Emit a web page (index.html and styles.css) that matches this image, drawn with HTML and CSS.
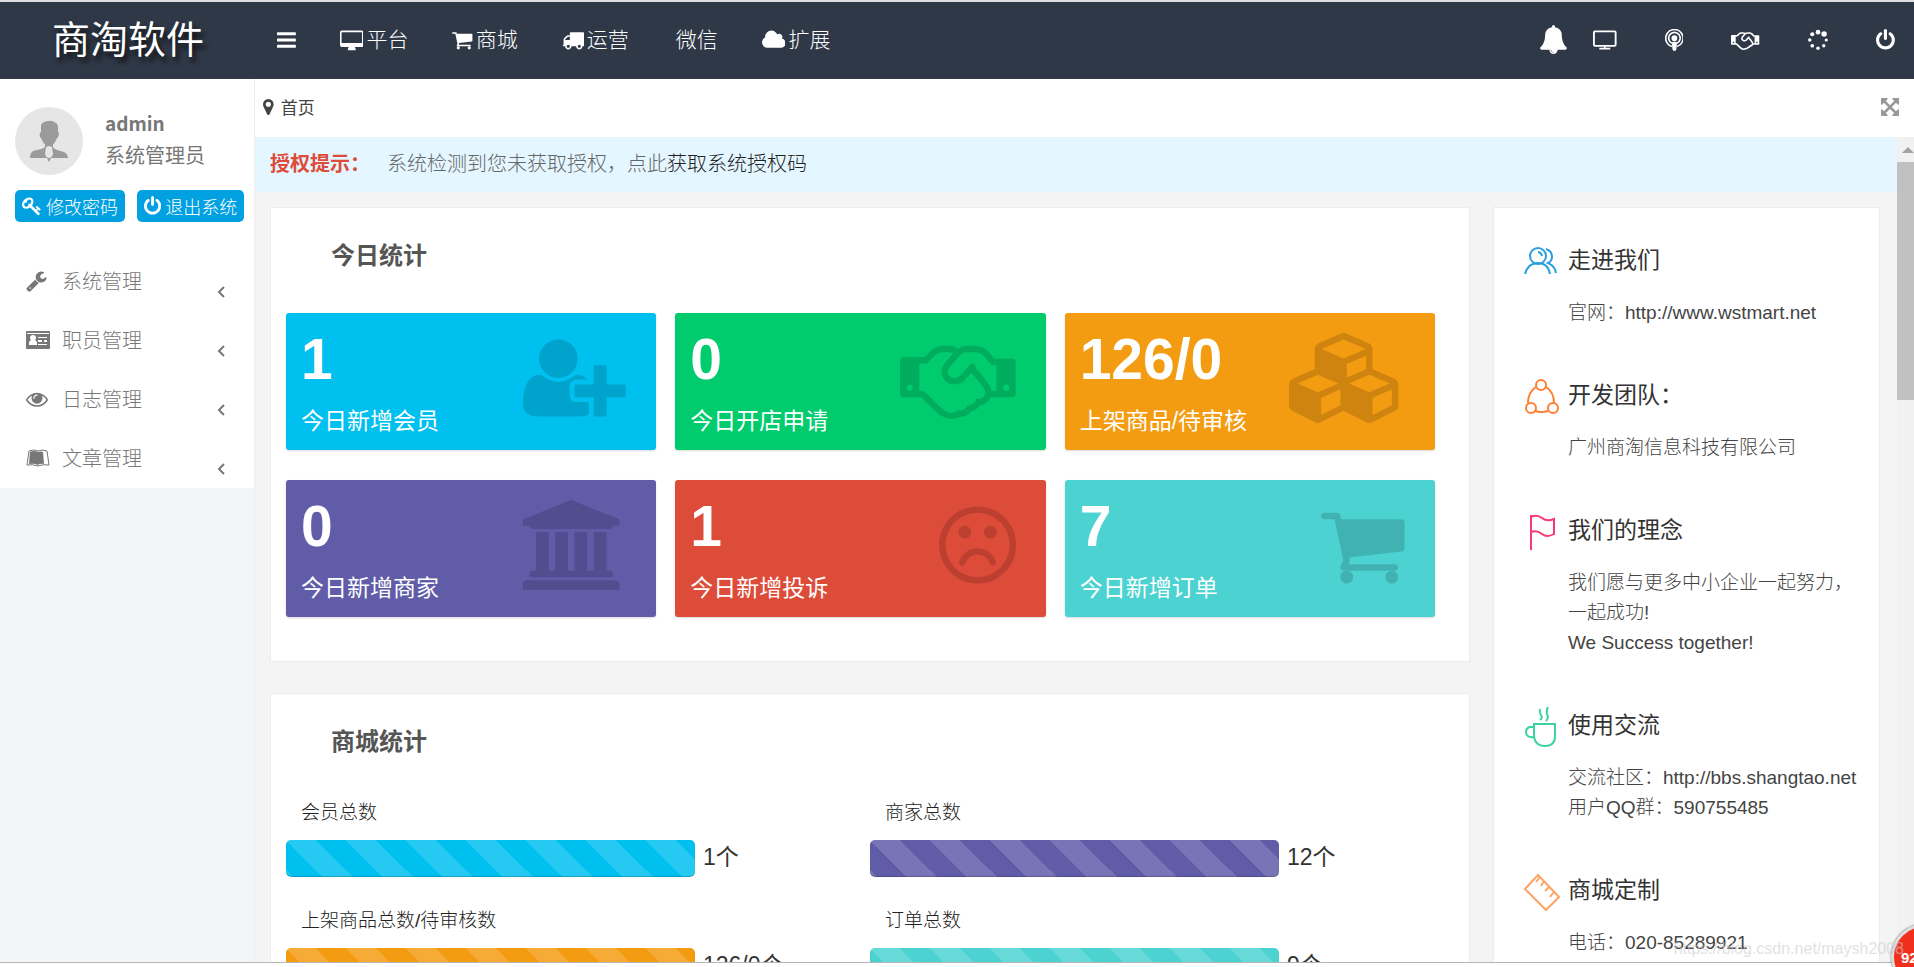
FILE: index.html
```html
<!doctype html>
<html lang="zh-CN">
<head>
  <meta charset="utf-8">
  <title>商淘软件</title>
  <link rel="stylesheet" href="styles.css">
</head>
<body>
  <svg class="defs">
    <defs>
      <path id="power" d="M1664 896q0 156-61 298t-164 245-245 164-298 61-298-61-245-164-164-245-61-298q0-182 80.500-343t226.500-270q43-32 95.500-25t83.500 50q32 42 24.500 94.500t-49.500 84.500q-98 74-151.500 181t-53.500 228q0 104 40.500 198.500t109.500 163.500 163.500 109.500 198.500 40.500 198.500-40.500 163.500-109.500 109.500-163.500 40.500-198.500q0-121-53.500-228t-151.500-181q-42-32-49.500-84.500t24.500-94.500q31-43 84-50t95 25q146 109 226.500 270t80.500 343zm-640-768v640q0 52-38 90t-90 38-90-38-38-90v-640q0-52 38-90t90-38 90 38 38 90z"/>
      <path id="cart" d="M704 1536q0 52-38 90t-90 38-90-38-38-90 38-90 90-38 90 38 38 90zm896 0q0 52-38 90t-90 38-90-38-38-90 38-90 90-38 90 38 38 90zm128-1088v512q0 24-16.500 42.500t-40.500 21.500l-1044 122q13 60 13 70 0 16-24 64h920q26 0 45 19t19 45-19 45-45 19h-1024q-26 0-45-19t-19-45q0-11 8-31.500t16-36 21.500-40 15.500-29.500l-177-823h-204q-26 0-45-19t-19-45 19-45 45-19h256q16 0 28.500 6.500t19.500 15.500 13 24.500 8 26 5.500 29.500 4.500 26h1201q26 0 45 19t19 45z"/>
      <path id="handshake" d="M192 1152q40 0 56-32t0-64-56-32-56 32 0 64 56 32zm1473-58q-10-13-38.500-50t-41.500-54-38-49-42.500-53-40.500-47-45-49l-125 140q-83 94-208.500 92t-205.500-98q-57-69-56.500-158t58.500-157l177-206q-22-11-51-16.500t-47.500-6-56.500.5-49 1q-92 0-158 66l-158 158h-155v544q5 0 21-.5t22 0 19.500 2 20.500 4.500 17.500 8.500 18.500 13.500l297 292q115 111 227 111 78 0 125-47 57 20 112.500-8t72.500-85q74 6 127-44 20-18 36-45.500t14-50.500q10 10 43 10 43 0 77-21t49.500-53 12-71.500-30.500-73.500zm159 58h96v-512h-93l-157-180q-66-76-169-76h-167q-89 0-146 67l-209 243q-28 33-28 75t27 75q43 51 110 52t111-49l193-218q25-23 53.500-21.500t47 27 8.500 56.500q16 19 56 63t60 68q29 36 82.500 105.500t64.500 84.500q52 66 60 140zm288 0q40 0 56-32t0-64-56-32-56 32 0 64 56 32zm192-576v640q0 26-19 45t-45 19h-434q-27 65-82 106.500t-125 51.500q-33 48-80.500 81.500t-102.500 45.500q-42 53-104.500 81.500t-128.500 24.500q-60 34-126 39.500t-127.500-14-117-53.500-103.500-81l-287-282h-358q-26 0-45-19t-19-45v-672q0-26 19-45t45-19h421q14-14 47-48t47.500-48 44-40 50.500-37.500 51-25.500 62-19.500 68-5.500h117q99 0 181 56 82-56 181-56h167q35 0 67 6t56.500 14.500 51.500 26.500 44.500 31 43 39.500 39 42 41 48 41.500 48.500h355q26 0 45 19t19 45z"/>
    </defs>
  </svg>

  <header class="header">
    <h1 class="logo">商淘软件</h1>
    <nav class="nav">
      <a href="#" aria-label="菜单"><svg class="icon" viewBox="128 0 1536 1792"><rect x="128" y="256" width="1536" height="256" rx="50"/><rect x="128" y="768" width="1536" height="256" rx="50"/><rect x="128" y="1280" width="1536" height="256" rx="50"/></svg></a>
      <a href="#"><svg class="icon" viewBox="0 0 1920 1792"><path fill-rule="evenodd" d="M160 128h1600q160 0 160 160v1024q0 160-160 160h-544q10 80 64 150v106h-640v-106q54-70 64-150h-544q-160 0-160-160v-1024q0-160 160-160zM128 300v840h1664v-840q0-44-44-44h-1576q-44 0-44 44z"/></svg>平台</a>
      <a href="#"><svg class="icon" viewBox="64 0 1664 1792"><use href="#cart"/></svg>商城</a>
      <a href="#"><svg class="icon" viewBox="0 0 1792 1792"><path d="M640 1408q0-52-38-90t-90-38-90 38-38 90 38 90 90 38 90-38 38-90zm-384-512h384v-256h-158q-13 0-22 9l-195 195q-9 9-9 22v30zm1280 512q0-52-38-90t-90-38-90 38-38 90 38 90 90 38 90-38 38-90zm256-1088v1024q0 15-4 26.500t-13.500 18.500-16.500 11.500-23.500 6-22.500 2-25.500 0-22.500-.5q0 106-75 181t-181 75-181-75-75-181h-384q0 106-75 181t-181 75-181-75-75-181h-64q-3 0-22.500.5t-25.500 0-22.500-2-23.500-6-16.500-11.500-13.500-18.500-4-26.500q0-26 19-45t45-19v-320q0-8-.5-35t0-38 2.500-34.500 6.500-37 14-30.500 22.500-30l198-198q19-19 50.500-32t58.500-13h160v-192q0-26 19-45t45-19h1024q26 0 45 19t19 45z"/></svg>运营</a>
      <a href="#"><i></i>微信</a>
      <a href="#"><svg class="icon" viewBox="64 0 1920 1792"><path d="M1984 1152q0 159-112.500 271.500t-271.500 112.500h-1088q-185 0-316.500-131.500t-131.500-316.500q0-132 71-241.500t187-163.500q-2-28-2-43 0-212 150-362t362-150q158 0 286.500 88t187.500 230q70-62 166-62 106 0 181 75t75 181q0 75-41 138 129 30 213 134.500t84 239.500z"/></svg>扩展</a>
    </nav>
    <div class="tools">
      <a class="bell" href="#" aria-label="消息"><svg viewBox="64 0 1664 1792"><path d="M912 1696q0-16-16-16-59 0-101.500-42.500t-42.500-101.500q0-16-16-16t-16 16q0 73 51.500 124.500t124.500 51.500q16 0 16-16zm816-288q0 52-38 90t-90 38h-448q0 106-75 181t-181 75-181-75-75-181h-448q-52 0-90-38t-38-90q50-42 91-88t85-119.500 74.500-158.500 50-206 19.500-260q0-152 117-282.500t307-158.500q-8-19-8-39 0-40 28-68t68-28 68 28 28 68q0 20-8 39 190 28 307 158.500t117 282.500q0 139 19.500 260t50 206 74.500 158.500 85 119.500 91 88z"/></svg></a>
      <a href="#" aria-label="前台"><svg class="icon" viewBox="0 0 1920 1792"><path fill-rule="evenodd" d="M160 128h1600q160 0 160 160v992q0 160-160 160h-736v96h384v128h-896v-128h384v-96h-736q-160 0-160-160v-992q0-160 160-160zM150 300v968q0 26 26 26h1568q26 0 26-26v-968q0-26-26-26h-1568q-26 0-26 26z"/></svg></a>
      <a href="#" aria-label="播客"><svg class="icon" viewBox="128 0 1536 1792"><g fill="none" stroke="#fff" stroke-width="130"><path d="M690 1430a708 708 0 1 1 412 0"/><path d="M700 1170a470 470 0 1 1 392 0"/></g><circle cx="896" cy="750" r="235"/><path d="M896 1010q210 0 210 130l-50 520q-10 132-160 132t-160-132l-50-520q0-130 210-130z"/></svg></a>
      <a href="#" aria-label="合作"><svg class="icon" viewBox="0 0 2304 1792"><use href="#handshake"/></svg></a>
      <a href="#" aria-label="清除缓存"><svg class="icon" viewBox="80 0 1664 1792"><circle cx="896" cy="256" r="190"/><circle cx="1390" cy="400" r="225"/><circle cx="1568" cy="896" r="128"/><circle cx="1364" cy="1364" r="136"/><circle cx="896" cy="1568" r="144"/><circle cx="428" cy="1364" r="152"/><circle cx="224" cy="896" r="144"/><circle cx="428" cy="428" r="170"/></svg></a>
      <a href="#" aria-label="退出"><svg class="icon" viewBox="128 0 1536 1792"><use href="#power"/></svg></a>
    </div>
  </header>

  <div class="body">
    <aside class="sidebar">
      <div class="side-inner">
        <div class="user">
          <svg class="avatar" viewBox="0 0 68 68"><circle cx="34" cy="34" r="34" fill="#e6e6e6"/><path fill="#9b9b9b" d="M26 18q2-4 8-4 3-1 5 1 4 1 4 5v5q2 1 0 5-1 1-2 3-1 3-3 4v3q1 2 4 3l7 2q4 2 4 6H15q0-5 3-7l8-2q4-1 4-3v-2q-2-1-3-4-1-2-2-3-1-4 1-5z"/><path fill="#e6e6e6" d="M31 40l3-1 3 1 1 7q-1 4-4 4t-4-4z"/><path fill="#9b9b9b" d="M32 51h4l-2 4z"/></svg>
          <div>
            <div class="user-name">admin</div>
            <div class="user-role">系统管理员</div>
          </div>
        </div>
        <div class="user-actions">
          <button type="button"><svg viewBox="0 0 1792 1792"><path d="M832 512q0-80-56-136t-136-56-136 56-56 136q0 42 19 83-41-19-83-19-80 0-136 56t-56 136 56 136 136 56 136-56 56-136q0-42-19-83 41 19 83 19 80 0 136-56t56-136zm851 704q0 17-49 66t-66 49q-9 0-28.500-16t-36.500-33-38.500-40-24.500-26l-96 96 220 220q28 28 28 68 0 42-39 81t-81 39q-40 0-68-28l-671-671q-176 131-365 131-163 0-265.500-102.500t-102.500-265.500q0-160 95-313t248-248 313-95q163 0 265.500 102.500t102.500 265.500q0 189-131 365l355 355 96-96q-3-3-26-24.500t-40-38.500-33-36.500-16-28.500q0-17 49-66t66-49q13 0 23 10 6 6 46 44.500t82 79.500 86.500 86 73 78 28.500 41z"/></svg>修改密码</button>
          <button type="button"><svg viewBox="128 0 1536 1792"><use href="#power"/></svg>退出系统</button>
        </div>
        <nav class="menu">
          <a href="#"><svg class="menu-icon" viewBox="64 0 1920 1792"><path d="M448 1472q0-26-19-45t-45-19-45 19-19 45 19 45 45 19 45-19 19-45zm644-420l-682 682q-37 37-90 37-52 0-91-37l-106-108q-38-36-38-90 0-53 38-91l681-681q39 98 114.500 173.500t173.500 114.500zm634-435q0 39-23 106-47 134-164.500 217.500t-258.500 83.500q-185 0-316.500-131.500t-131.500-316.500 131.500-316.500 316.500-131.500q58 0 121.500 16.500t107.500 46.500q16 11 16 28t-16 28l-293 169v224l193 107q5-3 79-48.500t135.500-81 70.500-35.500q15 0 23.500 10t8.500 25z"/></svg>系统管理<svg class="arrow" viewBox="0 0 8 12"><path d="M7 1L2 6l5 5"/></svg></a>
          <a href="#"><svg class="menu-icon" viewBox="0 0 24 22"><path fill-rule="evenodd" d="M1 2h22q1 0 1 1v16q0 1-1 1H1q-1 0-1-1V3q0-1 1-1zM1 4v1h22V4zM3 16h8v-2q0-2-2-3 1-1 1-2 0-3-3-3T4 9q0 1 1 2-2 1-2 3zM12 8v1h9V8zM12 11v2h4v-2zM18 11v2h3v-2zM12 15v1h9v-1z"/></svg>职员管理<svg class="arrow" viewBox="0 0 8 12"><path d="M7 1L2 6l5 5"/></svg></a>
          <a href="#"><svg class="menu-icon" viewBox="0 0 1955 1792"><path d="M1664 960q-152-236-381-353 61 104 61 225 0 185-131.500 316.500t-316.500 131.500-316.500-131.500-131.500-316.500q0-121 61-225-229 117-381 353 133 205 333.500 326.500t434.500 121.500 434.500-121.500 333.500-326.500zm-720-384q0-20-14-34t-34-14q-125 0-214.500 89.500t-89.500 214.500q0 20 14 34t34 14 34-14 14-34q0-86 61-147t147-61q20 0 34-14t14-34zm848 384q0 34-20 69-140 230-376.500 368.500t-499.500 138.500-499.500-139-376.500-368q-20-35-20-69t20-69q140-229 376.500-368t499.500-139 499.500 139 376.500 368q20 35 20 69z"/></svg>日志管理<svg class="arrow" viewBox="0 0 8 12"><path d="M7 1L2 6l5 5"/></svg></a>
          <a href="#"><svg class="menu-icon" viewBox="0 0 24 22"><path d="M4 5q4-2 8 0 3-1 5 0l1 12q-4-1-6 1-4-2-9-1z"/><path fill="none" stroke="currentColor" d="M3 4q5-2 9 0 4-2 9 0l2 14q-6-1-11 1-5-2-11-1z"/></svg>文章管理<svg class="arrow" viewBox="0 0 8 12"><path d="M7 1L2 6l5 5"/></svg></a>
        </nav>
      </div>
    </aside>

    <div class="content">
      <div class="crumb">
        <svg class="marker" viewBox="384 128 1024 1536"><path d="M1152 640q0-106-75-181t-181-75-181 75-75 181 75 181 181 75 181-75 75-181zm256 0q0 109-33 179l-364 774q-16 33-47.500 52t-67.500 19-67.500-19-46.500-52l-365-774q-33-70-33-179 0-212 150-362t362-150 362 150 150 362z"/></svg>
        <span>首页</span>
        <button class="expand" type="button" aria-label="全屏"><svg viewBox="128 128 1536 1536"><path d="M1411 541l-355 355 355 355 144-144q29-31 70-14 39 17 39 59v448q0 26-19 45t-45 19h-448q-42 0-59-40-17-39 14-69l144-144-355-355-355 355 144 144q31 30 14 69-17 40-59 40h-448q-26 0-45-19t-19-45v-448q0-42 40-59 39-17 69 14l144 144 355-355-355-355-144 144q-19 19-45 19-12 0-24-5-40-17-40-59v-448q0-26 19-45t45-19h448q42 0 59 40 17 39-14 69l-144 144 355 355 355-355-144-144q-31-30-14-69 17-40 59-40h448q26 0 45 19t19 45v448q0 42-39 59-13 5-25 5-26 0-45-19z"/></svg></button>
      </div>

      <div class="frame">
        <main class="page">
          <div class="alert"><strong>授权提示：</strong><span>系统检测到您未获取授权，点此<a href="#">获取系统授权码</a></span></div>
          <div class="columns">
            <div class="main-col">
              <section class="panel">
                <h2>今日统计</h2>
                <div class="cards">
                  <div class="card blue"><div class="num">1</div><div class="label">今日新增会员</div>
                    <svg viewBox="0 0 2048 1792"><path d="M704 896q-159 0-271.500-112.500t-112.500-271.500 112.500-271.500 271.500-112.500 271.500 112.500 112.500 271.500-112.500 271.500-271.500 112.500zm960 128h352q13 0 22.500 9.500t9.500 22.500v192q0 13-9.500 22.500t-22.500 9.500h-352v352q0 13-9.500 22.500t-22.500 9.500h-192q-13 0-22.500-9.500t-9.500-22.500v-352h-352q-13 0-22.500-9.500t-9.500-22.500v-192q0-13 9.500-22.500t22.500-9.500h352v-352q0-13 9.500-22.500t22.500-9.500h192q13 0 22.500 9.500t9.500 22.500v352zm-736 224q0 52 38 90t90 38h256v238q-68 50-171 50h-874q-121 0-194-69t-73-190q0-53 3.500-103.500t14-109 26.500-108.500 43-97.500 62-81 85.500-53.500 111.500-20q19 0 39 17 79 61 154.500 91.500t164.500 30.500 164.500-30.500 154.500-91.500q20-17 39-17 132 0 217 96h-223q-52 0-90 38t-38 90v192z"/></svg></div>
                  <div class="card green"><div class="num">0</div><div class="label">今日开店申请</div>
                    <svg viewBox="0 0 2304 1792"><use href="#handshake"/></svg></div>
                  <div class="card orange"><div class="num">126/0</div><div class="label">上架商品/待审核</div>
                    <svg viewBox="0 0 2304 1792"><path d="M640 1632l384-192v-314l-384 164v342zm-64-454l404-173-404-173-404 173zm1088 454l384-192v-314l-384 164v342zm-64-454l404-173-404-173-404 173zm-448-293l384-165v-266l-384 164v267zm-64-379l441-189-441-189-441 189zm1088 518v416q0 36-19 67t-52 47l-448 224q-25 14-57 14t-57-14l-448-224q-4-2-7-4-2 2-7 4l-448 224q-25 14-57 14t-57-14l-448-224q-33-16-52-47t-19-67v-416q0-38 21.500-70t56.500-48l434-186v-400q0-38 21.500-70t56.500-48l448-192q23-10 50-10t50 10l448 192q35 16 56.500 48t21.500 70v400l434 186q36 16 57 48t21 70z"/></svg></div>
                  <div class="card purple"><div class="num">0</div><div class="label">今日新增商家</div>
                    <svg viewBox="0 0 2048 1792"><path d="M960 0l960 384v128h-128q0 26-20.500 45t-48.500 19h-1526q-28 0-48.500-19t-20.500-45h-128v-128zm-704 640h256v768h128v-768h256v768h128v-768h256v768h128v-768h256v768h59q28 0 48.500 19t20.500 45v64h-1664v-64q0-26 20.500-45t48.500-19h59v-768zm1595 960q28 0 48.500 19t20.500 45v128h-1920v-128q0-26 20.500-45t48.500-19h1782z"/></svg></div>
                  <div class="card red"><div class="num">1</div><div class="label">今日新增投诉</div>
                    <svg viewBox="128 0 1536 1792"><path d="M1262 1229q8 25-4 48t-37 31-49-4-32-38q-25-80-92.500-129.500t-151.500-49.500-151.500 49.500-92.500 129.500q-8 26-31.500 38t-48.500 4q-26-8-38-31t-4-48q37-121 138-195t228-74 228 74 138 195zm-494-589q0 53-37.500 90.500t-90.500 37.500-90.500-37.500-37.500-90.500 37.500-90.500 90.500-37.500 90.500 37.500 37.500 90.500zm512 0q0 53-37.500 90.500t-90.500 37.500-90.500-37.500-37.500-90.500 37.500-90.500 90.500-37.500 90.500 37.500 37.500 90.500zm256 256q0-130-51-248.500t-136.500-204-204-136.500-248.500-51-248.500 51-204 136.500-136.500 204-51 248.500 51 248.500 136.500 204 204 136.500 248.500 51 248.500-51 204-136.500 136.500-204 51-248.500zm128 0q0 209-103 385.500t-279.500 279.500-385.500 103-385.500-103-279.500-279.500-103-385.500 103-385.500 279.500-279.500 385.500-103 385.500 103 279.500 279.500 103 385.500z"/></svg></div>
                  <div class="card teal"><div class="num">7</div><div class="label">今日新增订单</div>
                    <svg viewBox="64 0 1664 1792"><use href="#cart"/></svg></div>
                </div>
              </section>

              <section class="panel">
                <h2>商城统计</h2>
                <div class="totals">
                  <div class="total"><div class="total-name">会员总数</div><div class="total-row"><div class="bar blue"></div>1个</div></div>
                  <div class="total"><div class="total-name">商家总数</div><div class="total-row"><div class="bar purple"></div>12个</div></div>
                  <div class="total"><div class="total-name">上架商品总数/待审核数</div><div class="total-row"><div class="bar orange"></div>126/0个</div></div>
                  <div class="total"><div class="total-name">订单总数</div><div class="total-row"><div class="bar teal"></div>9个</div></div>
                </div>
              </section>
            </div>

            <aside class="panel about">
              <section>
                <h3><svg viewBox="0 0 36 42" stroke="#2b9fdd"><circle cx="14" cy="15" r="8"/><path d="M1 33q3-11 13-11t12 11M14 11q3 0 4 4M22 8q6 2 6 8 0 4-4 6 7 3 8 10"/></svg>走进我们</h3>
                <p>官网：http://www.wstmart.net</p>
              </section>
              <section>
                <h3><svg viewBox="0 0 36 42" stroke="#ff7f32"><circle cx="17" cy="9" r="5"/><circle cx="7" cy="32" r="5"/><circle cx="29" cy="32" r="5"/><path d="M12 11Q4 16 4 27M22 11q8 5 8 16M11 35q6 2 13 0"/></svg>开发团队：</h3>
                <p>广州商淘信息科技有限公司</p>
              </section>
              <section>
                <h3><svg viewBox="0 0 36 42" stroke="#f83a73"><path d="M7 4v35M7 6q6-3 11 1t12 1v15q-7 4-12 0t-11-2"/></svg>我们的理念</h3>
                <p>我们愿与更多中小企业一起努力，<br>一起成功!<br>We Success together!</p>
              </section>
              <section>
                <h3><svg viewBox="0 0 36 42" stroke="#3dd2a3"><path d="M10 18h21v12q0 10-10 10t-11-10zM10 21H6q-4 1-4 5 0 6 8 5M16 14q3-2 1-5t-1-6M22 15q3-3 1-7-1-4 1-7"/></svg>使用交流</h3>
                <p>交流社区：http://bbs.shangtao.net<br>用户QQ群：590755485</p>
              </section>
              <section>
                <h3><svg viewBox="0 0 36 42" stroke="#ffa467"><path d="M14 4l21 22-13 13L1 18zM14 4l2 2-4 5M20 10l-3 5M25 16l-4 4M30 21l-4 5"/></svg>商城定制</h3>
                <p>电话：020-85289921</p>
              </section>
            </aside>
          </div>
        </main>
        <div class="scroll"><div class="scroll-up"></div><div class="scroll-thumb"></div></div>
      </div>
    </div>
  </div>
  <footer class="bottom"></footer>
  <div class="badge">92</div>
  <div class="watermark">https://blog.csdn.net/maysh2008</div>
</body>
</html>
```
FILE: styles.css
```css
* {
  box-sizing: border-box;
}

body {
  margin: 0;
  height: 100vh;
  display: flex;
  flex-direction: column;
  position: relative;
  overflow: hidden;
  background: #fff;
  color: #444;
  font-family: "Liberation Sans", "Noto Sans CJK SC", sans-serif;
  font-size: 19px;
}

a {
  color: inherit;
  text-decoration: none;
}

svg {
  display: block;
  flex: none;
  fill: currentColor;
}

h1, h2, h3, p {
  margin: 0;
}

.defs {
  position: absolute;
  width: 0;
  height: 0;
}

/* header */
.header {
  flex: none;
  height: 79px;
  display: flex;
  align-items: center;
  padding: 0 19px 2px 0;
  border-top: 2px solid #dfdfe3;
  background: #2f3847;
  color: #fff;
}

.logo {
  width: 277px;
  padding-left: 52px;
  font-size: 38px;
  font-weight: 400;
  line-height: 48px;
  text-shadow: 3px 5px 5px #111;
}

.nav, .tools {
  display: flex;
  align-items: center;
}

.nav {
  gap: 44px;
  font-size: 21px;
  font-weight: 300;
  line-height: 30px;
}

.nav a {
  display: flex;
  align-items: center;
  gap: 3px;
}

.icon {
  height: 22px;
}

.tools {
  margin-left: auto;
  gap: 48px;
}

.bell {
  margin-right: -22px;
}

.bell svg {
  height: 29px;
}

/* sidebar */
.body {
  flex: 1;
  min-height: 0;
  display: flex;
}

.sidebar {
  flex: none;
  width: 255px;
  border-right: 1px solid #eee;
  background: #f2f6f7;
  color: #777;
}

.side-inner {
  background: #fff;
  padding-top: 28px;
}

.user {
  display: flex;
  gap: 22px;
  padding-left: 15px;
}

.avatar {
  width: 68px;
  height: 68px;
}

.user-name {
  padding-top: 2px;
  font-family: "Noto Sans CJK SC", sans-serif;
  font-weight: 700;
  line-height: 28px;
}

.user-role {
  font-size: 20px;
  line-height: 38px;
}

.user-actions {
  display: flex;
  gap: 12px;
  padding: 15px 8px 30px 15px;
}

.user-actions button {
  flex: none;
  height: 32px;
  display: flex;
  align-items: center;
  gap: 4px;
  padding: 0 7px;
  border: 0;
  border-radius: 5px;
  background: #00a0e1;
  color: #fff;
  font: inherit;
  font-size: 18px;
  font-weight: 300;
  white-space: nowrap;
}

.user-actions svg {
  height: 20px;
}

.menu a {
  height: 59px;
  display: flex;
  align-items: center;
  padding: 0 29px 2px 26px;
  font-size: 20px;
  font-weight: 300;
}

.menu-icon {
  width: 24px;
  height: 22px;
  margin-right: 12px;
}

.arrow {
  width: 8px;
  height: 12px;
  margin: 22px 0 0 auto;
  fill: none;
  stroke: currentColor;
  stroke-width: 2;
}

/* content */
.content {
  flex: 1;
  min-width: 0;
  display: flex;
  flex-direction: column;
}

.crumb {
  flex: none;
  height: 58px;
  display: flex;
  align-items: center;
  padding: 0 15px 3px 8px;
  font-size: 17px;
}

.marker {
  height: 16px;
  margin-right: 7px;
}

.expand {
  margin-left: auto;
  padding: 0;
  border: 0;
  background: none;
  color: #999;
}

.expand svg {
  height: 18px;
}

.frame {
  flex: 1;
  min-height: 0;
  display: flex;
  background: #f4f4f4;
}

.page {
  flex: 1;
  min-width: 0;
  overflow: hidden;
}

.alert {
  display: flex;
  gap: 17px;
  padding: 12px 15px 13px;
  border-radius: 5px;
  background: #e4f6ff;
  color: #666;
  font-size: 20px;
  font-weight: 300;
  line-height: 30px;
}

.alert strong {
  color: #dd4b39;
  font-weight: 700;
}

.alert a {
  color: #222;
}

.columns {
  display: grid;
  grid-template-columns: 1fr 387px;
  gap: 23px;
  padding: 15px 17px 0 15px;
}

.panel {
  border: 1px solid #ececec;
  background: #fff;
}

.main-col .panel {
  padding: 33px 34px 44px 15px;
  margin-bottom: 31px;
}

.panel h2 {
  padding-left: 45px;
  color: #555;
  font-size: 24px;
  line-height: 30px;
}

.cards {
  display: grid;
  grid-template-columns: repeat(3, 1fr);
  gap: 30px 19px;
  padding-top: 42px;
}

.card {
  position: relative;
  height: 137px;
  padding: 18px 15px 0;
  border-radius: 3px;
  box-shadow: 0 1px 2px rgba(0, 0, 0, .15);
  color: #fff;
}

.card svg {
  position: absolute;
  top: 20px;
  right: 30px;
  height: 90px;
  fill: rgba(0, 0, 0, .15);
}

.num {
  font-size: 57px;
  font-weight: 700;
  line-height: 57px;
}

.label {
  margin-top: 18px;
  font-size: 23px;
  line-height: 30px;
}

.blue { background-color: #00c0ef; }
.green { background-color: #00cc6e; }
.orange { background-color: #f39c12; }
.purple { background-color: #605ca8; }
.red { background-color: #dd4b39; }
.teal { background-color: #4dd2d2; }

.totals {
  display: grid;
  grid-template-columns: 1fr 1fr;
  gap: 29px 19px;
  padding-top: 41px;
}

.total-name {
  padding-left: 15px;
  margin-bottom: 12px;
  color: #222;
  font-weight: 300;
  line-height: 30px;
}

.total-row {
  display: flex;
  gap: 8px;
  color: #333;
  font-size: 23px;
  line-height: 34px;
}

.bar {
  width: 409px;
  max-width: 80%;
  height: 37px;
  border-radius: 5px;
  box-shadow: inset 0 -1px 1px rgba(0, 0, 0, .2);
  background-image: linear-gradient(45deg, rgba(255, 255, 255, .15) 25%, transparent 25%, transparent 50%, rgba(255, 255, 255, .15) 50%, rgba(255, 255, 255, .15) 75%, transparent 75%);
  background-size: 60px 60px;
}

/* right column */
.about {
  padding: 35px 0 0 30px;
}

.about section {
  margin-bottom: 51px;
}

.about h3 {
  height: 30px;
  display: flex;
  align-items: center;
  gap: 8px;
  margin-bottom: 25px;
  color: #333;
  font-size: 23px;
  font-weight: 400;
  white-space: nowrap;
}

.about h3 svg {
  width: 36px;
  height: 42px;
  margin-top: 8px;
  fill: none;
  stroke-width: 2;
}

.about p {
  padding-left: 44px;
  font-weight: 300;
  line-height: 30px;
  white-space: nowrap;
}

.about section + section {
  margin-top: -1px;
}

/* scrollbar */
.scroll {
  flex: none;
  width: 17px;
  background: #f1f1f1;
}

.scroll-up {
  width: 12px;
  height: 25px;
  padding-top: 10px;
  margin-left: 5px;
}

.scroll-up::before {
  content: "";
  display: block;
  border: 6px solid transparent;
  border-top: 0;
  border-bottom-color: #a3a3a3;
}

.scroll-thumb {
  height: 238px;
  background: #c1c1c1;
}

.bottom {
  flex: none;
  height: 5px;
  border-top: 1px solid #b5b5b5;
  background: #fff;
}

.watermark {
  position: absolute;
  right: 10px;
  bottom: 7px;
  color: rgba(205, 205, 205, .6);
  font-size: 16px;
  line-height: 22px;
}

.badge {
  position: absolute;
  right: -43px;
  bottom: -23px;
  width: 66px;
  height: 66px;
  padding: 22px 0 0 7px;
  border: 3px solid #ddd;
  border-radius: 50%;
  box-shadow: 0 0 2px #555;
  background: #f0301c;
  color: #fff;
  font-size: 15px;
  font-weight: 700;
}
```
